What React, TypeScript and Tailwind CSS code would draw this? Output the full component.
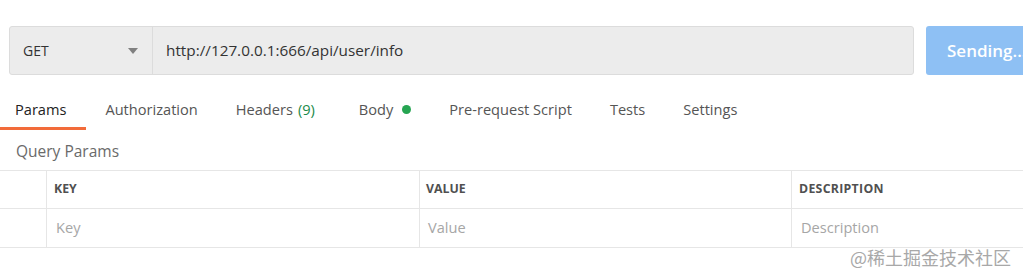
export default function App() {
  const tabs = [
    { label: 'Params', active: true },
    { label: 'Authorization' },
    { label: 'Headers', count: '(9)' },
    { label: 'Body', dot: true },
    { label: 'Pre-request Script' },
    { label: 'Tests' },
    { label: 'Settings' },
  ];

  return (
    <div
      className="w-[1023px] h-[279px] overflow-hidden bg-white relative"
      style={{ fontFamily: '"Open Sans", "Noto Sans", sans-serif' }}
    >
      <div className="flex items-stretch pt-[26px] pl-[9px] h-[75px] w-[1100px]">
        <div className="flex flex-1 max-w-[905px] rounded-[3px] border border-[#dcdcdc] bg-[#ececec]">
          <div className="flex w-[143px] items-center justify-between border-r border-[#dcdcdc] pl-[13px] pr-[14px]">
            <span className="text-[14px] text-[#333]">GET</span>
            <svg width="10" height="6" viewBox="0 0 10 6">
              <path d="M0 0 L10 0 L5 6 Z" fill="#808080" />
            </svg>
          </div>
          <div className="flex flex-1 items-center pl-[13px] text-[15.3px] text-[#333]">
            http://127.0.0.1:666/api/user/info
          </div>
        </div>
        <div className="ml-[12px] flex w-[120px] items-center rounded-[3px] bg-[#8ec0f4] pl-[21px] text-[17px] font-semibold text-white">
          Sending...
        </div>
      </div>

      <div className="mt-[17px] flex h-[38px]">
        {tabs.map((t) => (
          <div
            key={t.label}
            className={`flex h-full items-center border-b-[3px] ${t.active ? 'border-[#f26b3a] pl-[15px] pr-[20px] text-[#222]' : 'border-transparent pl-[19px] text-[#555]'} ${t.count ? 'pr-[25px]' : t.active ? '' : 'pr-[19px]'}`}
          >
            <span className="text-[14.6px] leading-[19px]">{t.label}</span>
            {t.count && <span className="ml-[5px] text-[14.6px] leading-[19px] text-[#1b8a4a]">{t.count}</span>}
            {t.dot && <span className="ml-[9px] h-[9px] w-[9px] rounded-full bg-[#26a552]" />}
          </div>
        ))}
      </div>

      <div className="mt-[12px] pl-[16px] text-[15.5px] leading-[19px] text-[#6a6a6a]">Query Params</div>

      <div className="mt-[9px] border-t border-[#e6e6e6] text-[12.3px]">
        <div className="grid h-[38px] grid-cols-[46px_373px_372px_1fr] border-b border-[#e6e6e6]">
          <div />
          <div className="flex items-center border-l border-[#e6e6e6] pl-[7px] font-bold text-[#505050]">KEY</div>
          <div className="flex items-center border-l border-[#e6e6e6] pl-[6px] font-bold text-[#505050]">VALUE</div>
          <div className="flex items-center border-l border-[#e6e6e6] pl-[7px] font-bold tracking-[0.3px] text-[#505050]">DESCRIPTION</div>
        </div>
        <div className="grid h-[39px] grid-cols-[46px_373px_372px_1fr] border-b border-[#e6e6e6] text-[14.6px] text-[#a6a6a6]">
          <div />
          <div className="flex items-center border-l border-[#e6e6e6] pl-[9px]">Key</div>
          <div className="flex items-center border-l border-[#e6e6e6] pl-[8px]">Value</div>
          <div className="flex items-center border-l border-[#e6e6e6] pl-[9px]">Description</div>
        </div>
      </div>

      <div
        className="absolute right-[12px] top-[245px] text-[18px] leading-[24px] text-[#a8a8a8]"
        style={{ fontFamily: '"Noto Sans CJK SC", sans-serif' }}
      >
        @稀土掘金技术社区
      </div>
    </div>
  );
}
